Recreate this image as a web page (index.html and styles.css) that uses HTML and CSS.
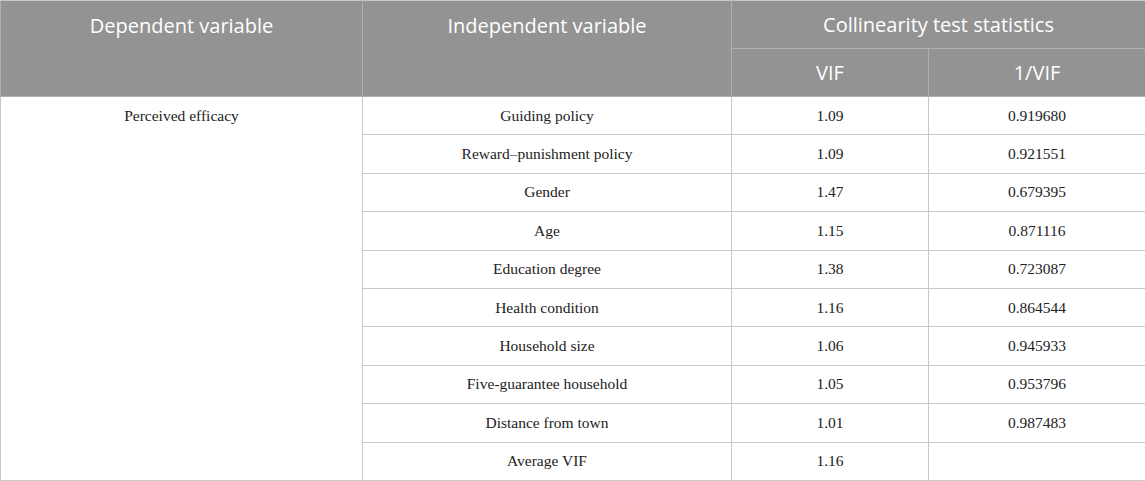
FILE: index.html
```html
<!DOCTYPE html>
<html>
<head>
<meta charset="utf-8">
<link rel="stylesheet" href="styles.css">
</head>
<body>
<table class="stats">
  <colgroup>
    <col class="c1"><col class="c2"><col class="c3"><col class="c4">
  </colgroup>
  <thead>
    <tr>
      <th rowspan="2" class="top">Dependent variable</th>
      <th rowspan="2" class="top">Independent variable</th>
      <th colspan="2">Collinearity test statistics</th>
    </tr>
    <tr>
      <th>VIF</th>
      <th>1/VIF</th>
    </tr>
  </thead>
  <tbody>
    <tr><td rowspan="10" class="dep">Perceived efficacy</td><td>Guiding policy</td><td>1.09</td><td>0.919680</td></tr>
    <tr><td>Reward–punishment policy</td><td>1.09</td><td>0.921551</td></tr>
    <tr><td>Gender</td><td>1.47</td><td>0.679395</td></tr>
    <tr><td>Age</td><td>1.15</td><td>0.871116</td></tr>
    <tr><td>Education degree</td><td>1.38</td><td>0.723087</td></tr>
    <tr><td>Health condition</td><td>1.16</td><td>0.864544</td></tr>
    <tr><td>Household size</td><td>1.06</td><td>0.945933</td></tr>
    <tr><td>Five-guarantee household</td><td>1.05</td><td>0.953796</td></tr>
    <tr><td>Distance from town</td><td>1.01</td><td>0.987483</td></tr>
    <tr><td>Average VIF</td><td>1.16</td><td></td></tr>
  </tbody>
</table>
</body>
</html>
```

FILE: styles.css
```css
html, body {
  margin: 0;
  padding: 0;
  background: #ffffff;
}
.stats {
  width: 1145px;
  table-layout: fixed;
  border-collapse: collapse;
}
.c1 { width: 362px; }
.c2 { width: 369px; }
.c3 { width: 197px; }
.c4 { width: 217px; }
.stats th {
  background: #939393;
  color: #ffffff;
  font-family: "Open Sans", "Noto Sans", sans-serif;
  font-weight: 400;
  font-size: 20px;
  height: 47px;
  padding: 0;
  text-align: center;
  vertical-align: middle;
  border: 1px solid #b0b0b0;
  border-top-color: #c8c8c8;
}
.stats th.top {
  vertical-align: top;
  padding-top: 10.5px;
}
.stats td {
  font-family: "Liberation Serif", "Times New Roman", serif;
  font-size: 15.5px;
  color: #222222;
  text-align: center;
  vertical-align: middle;
  height: 37.4px;
  padding: 0;
  border: 1px solid #c8c8c8;
}
.stats td.dep {
  vertical-align: top;
  padding-top: 10px;
}
```
